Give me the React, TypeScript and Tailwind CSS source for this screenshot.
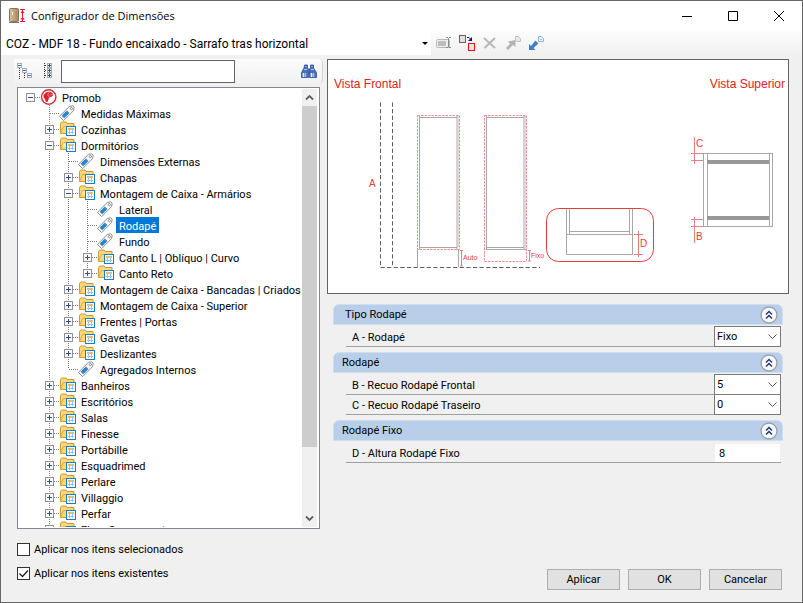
import { useState } from "react";
import type { ReactNode } from "react";

type Kind = "root" | "tag" | "folder";
type Mark = "plus" | "minus" | "none";
type Node = { label: string; level: number; kind: Kind; mark: Mark };

const nodes: Node[] = [
  { label: "Promob", level: 0, kind: "root", mark: "minus" },
  { label: "Medidas Máximas", level: 1, kind: "tag", mark: "none" },
  { label: "Cozinhas", level: 1, kind: "folder", mark: "plus" },
  { label: "Dormitórios", level: 1, kind: "folder", mark: "minus" },
  { label: "Dimensões Externas", level: 2, kind: "tag", mark: "none" },
  { label: "Chapas", level: 2, kind: "folder", mark: "plus" },
  { label: "Montagem de Caixa - Armários", level: 2, kind: "folder", mark: "minus" },
  { label: "Lateral", level: 3, kind: "tag", mark: "none" },
  { label: "Rodapé", level: 3, kind: "tag", mark: "none" },
  { label: "Fundo", level: 3, kind: "tag", mark: "none" },
  { label: "Canto L | Oblíquo | Curvo", level: 3, kind: "folder", mark: "plus" },
  { label: "Canto Reto", level: 3, kind: "folder", mark: "plus" },
  { label: "Montagem de Caixa - Bancadas | Criados", level: 2, kind: "folder", mark: "plus" },
  { label: "Montagem de Caixa - Superior", level: 2, kind: "folder", mark: "plus" },
  { label: "Frentes | Portas", level: 2, kind: "folder", mark: "plus" },
  { label: "Gavetas", level: 2, kind: "folder", mark: "plus" },
  { label: "Deslizantes", level: 2, kind: "folder", mark: "plus" },
  { label: "Agregados Internos", level: 2, kind: "tag", mark: "none" },
  { label: "Banheiros", level: 1, kind: "folder", mark: "plus" },
  { label: "Escritórios", level: 1, kind: "folder", mark: "plus" },
  { label: "Salas", level: 1, kind: "folder", mark: "plus" },
  { label: "Finesse", level: 1, kind: "folder", mark: "plus" },
  { label: "Portábille", level: 1, kind: "folder", mark: "plus" },
  { label: "Esquadrimed", level: 1, kind: "folder", mark: "plus" },
  { label: "Perlare", level: 1, kind: "folder", mark: "plus" },
  { label: "Villaggio", level: 1, kind: "folder", mark: "plus" },
  { label: "Perfar", level: 1, kind: "folder", mark: "plus" },
  { label: "Flora Component", level: 1, kind: "folder", mark: "plus" },
];

// True when a later sibling at `level` follows row `index` before its parent closes.
function continues(index: number, level: number) {
  for (let i = index + 1; i < nodes.length; i++) {
    if (nodes[i].level < level) return false;
    if (nodes[i].level === level) return true;
  }
  return false;
}

const dots = { stroke: "#808080", strokeDasharray: "1 1", shapeRendering: "crispEdges" as const };

function Guide({ index, level }: { index: number; level: number }) {
  const node = nodes[index];
  const own = node.level === level;
  const below = level > 0 && continues(index, level);
  return (
    <svg width="19" height="16" className="shrink-0" aria-hidden="true">
      {own && level > 0 && <path d="M9.500 0V8" {...dots} />}
      {below && <path d="M9.500 0V16" {...dots} />}
      {own && <path d="M10 8.500H20" {...dots} />}
      {own && node.mark !== "none" && (
        <g shapeRendering="crispEdges">
          <rect x="5.500" y="4.500" width="8" height="8" fill="#fafafa" stroke="#919191" />
          <path d={node.mark === "plus" ? "M7 8.500h5M9.500 6v5" : "M7 8.500h5"} stroke="#33508f" />
        </g>
      )}
    </svg>
  );
}

function NodeIcon({ kind, open }: { kind: Kind; open: boolean }) {
  return (
    <svg width="17" height="16" viewBox="0 0 17 16" className="shrink-0" aria-hidden="true">
      {kind === "root" && (
        <>
          <circle cx="8.700" cy="8" r="7.200" fill="#fff" stroke="#dc2a35" strokeWidth="1.400" />
          <path d="M3.500 6l2.500-2.500 3.500-1 3 1.500.5 2.500-2 1.500-2 .5-.5 2-1 2.500-2-.5-.5-2.500-1.500-1.500z" fill="#d8232f" />
          <path d="M9.500 3l-2 3 2 2M12.500 5.500l-3 .5" stroke="#f5a0a0" strokeWidth=".8" fill="none" />
        </>
      )}
      {kind === "tag" && (
        <g transform="rotate(-45 8.500 7.500)">
          <path d="M0 4.500h14l3 2v2l-3 2H0z" fill="#f6f6f6" stroke="#8a8a8a" strokeWidth=".9" />
          <rect x="2" y="5.700" width="7.500" height="3.600" fill="#2b8bd2" />
          <path d="M4.500 5.700v3.600M7 5.700v3.600" stroke="#1c68a8" strokeWidth=".6" />
          <circle cx="14" cy="7.500" r="1.100" fill="#fff" stroke="#777" strokeWidth=".8" />
        </g>
      )}
      {kind === "folder" && (
        <>
          <path d="M1.500 12.500V2.500l1-1.500h4.500l1 1.500h7v10z" fill="#fcd878" stroke="#d0963a" />
          <path d="M1.500 12.500l3-7h11" fill="none" stroke="#e0ac4c" />
          {open && <path d="M4.500 6.500h9v3h-10z" fill="#fff0b8" />}
          <g shapeRendering="crispEdges">
            <rect x="7.500" y="5.500" width="9" height="9" fill="#fff" stroke="#1580c4" />
            <path d="M9 8h6" stroke="#f2c260" strokeWidth="2" />
            <path d="M9 11.500h6M10.500 7v6M13.500 7v6" stroke="#9cc2e8" />
          </g>
        </>
      )}
    </svg>
  );
}

function Tree() {
  const [selected, setSelected] = useState("Rodapé");
  return (
    <div className="mx-[3px] mt-1 flex min-h-0 flex-1 border border-[#828790] bg-white py-px pr-[2px] pl-px">
      <ul className="min-w-0 flex-1 overflow-hidden pl-[2px]">
        {nodes.map((node, index) => (
          <li key={node.label} className="flex h-4 items-center">
            {Array.from({ length: node.level + 1 }, (_, level) => (
              <Guide key={level} index={index} level={level} />
            ))}
            <NodeIcon kind={node.kind} open={node.mark === "minus"} />
            <button
              type="button"
              onClick={() => setSelected(node.label)}
              className={
                selected === node.label
                  ? "ml-[2px] h-4 bg-[#0078d7] px-[3px] pt-[2px] whitespace-nowrap text-white"
                  : "ml-[2px] h-4 px-[3px] pt-[2px] whitespace-nowrap"
              }
            >
              {node.label}
            </button>
          </li>
        ))}
      </ul>
      <div className="flex w-[15px] flex-col bg-[#f0f0f0]">
        <button type="button" aria-label="Rolar para cima" className="flex h-[17px] items-center justify-center">
          <svg width="9" height="7" viewBox="0 0 9 7"><path d="M1 5.500l3.500-3.500L8 5.500" fill="none" stroke="#606060" strokeWidth="1.800" /></svg>
        </button>
        <div className="h-[341px] bg-[#cdcdcd]" />
        <button type="button" aria-label="Rolar para baixo" className="mt-auto flex h-[17px] items-center justify-center">
          <svg width="9" height="7" viewBox="0 0 9 7"><path d="M1 1.500L4.500 5 8 1.500" fill="none" stroke="#606060" strokeWidth="1.800" /></svg>
        </button>
      </div>
    </div>
  );
}

function TitleBar() {
  return (
    <header className="flex h-[30px] shrink-0 items-center bg-white pl-2">
      <svg width="17" height="16" viewBox="0 0 17 16" aria-hidden="true">
        <defs>
          <linearGradient id="door" x1="0" x2="1">
            <stop offset="0" stopColor="#d9c3a3" />
            <stop offset="1" stopColor="#a8845c" />
          </linearGradient>
        </defs>
        <rect x=".5" y=".5" width="9" height="13" rx="1" fill="url(#door)" stroke="#8d7252" />
        <path d="M0 14.500h10" stroke="#777" />
        <path d="M3.500 4v3" stroke="#fff" />
        <path d="M11 1.500h5M11 13.500h5M13.500 2v11" stroke="#e0202c" />
        <path d="M11.500 5l2-3 2 3zM11.500 10l2 3 2-3z" fill="#e0202c" />
      </svg>
      <h1 className="ml-[5px] flex-1 font-['Open_Sans',sans-serif] text-[11px]">Configurador de Dimensões</h1>
      <div className="flex h-full">
        <button type="button" aria-label="Minimizar" className="flex w-[46px] items-center justify-center">
          <svg width="10" height="10"><path d="M0 5.500h10" stroke="#000" /></svg>
        </button>
        <button type="button" aria-label="Maximizar" className="flex w-[46px] items-center justify-center">
          <svg width="10" height="10"><path d="M.5.5h9v9h-9z" fill="none" stroke="#000" /></svg>
        </button>
        <button type="button" aria-label="Fechar" className="flex w-[46px] items-center justify-center">
          <svg width="10" height="10"><path d="M0 0l10 10M10 0L0 10" stroke="#000" /></svg>
        </button>
      </div>
    </header>
  );
}

function ToolButton({ label, children }: { label: string; children: ReactNode }) {
  return (
    <button type="button" aria-label={label} className="flex w-[23px] items-center justify-center">
      <svg width="17" height="16" viewBox="0 0 17 16">{children}</svg>
    </button>
  );
}

function ModelBar() {
  return (
    <div className="flex h-6 shrink-0 bg-linear-to-b from-[#fcfcfc] to-[#f0f0f0]">
      <div className="grid w-[430px] items-center">
        <select
          aria-label="Modelo"
          className="col-start-1 row-start-1 h-6 w-full appearance-none bg-white pt-px pl-[5px] font-['Roboto',sans-serif] text-[12px]"
        >
          <option>COZ - MDF 18 - Fundo encaixado - Sarrafo tras horizontal</option>
        </select>
        <svg width="6" height="3" className="pointer-events-none col-start-1 row-start-1 mr-[3px] justify-self-end">
          <path d="M0 0h6L3 3z" />
        </svg>
      </div>
      <div className="flex pl-[2px]">
        <ToolButton label="Renomear">
          <rect x=".5" y="4.500" width="13" height="8" rx="1" fill="#eee" stroke="#b8b8b8" />
          <rect x="2" y="6" width="8" height="5" fill="#bcbcbc" />
          <path d="M10 2.500h2M13 2.500h2M12.500 3v9M10 12.500h2M13 12.500h2" stroke="#8a8a8a" />
        </ToolButton>
        <ToolButton label="Duplicar">
          <rect x=".5" y=".5" width="6" height="7" fill="#e2e0e4" stroke="#6d5f63" />
          <path d="M8 2.500h2l2 2" fill="none" stroke="#10107c" />
          <path d="M13 2v4H9z" fill="#10107c" />
          <rect x="9.500" y="8.500" width="6" height="7" fill="#dfe6ea" stroke="#f00c0c" />
        </ToolButton>
        <ToolButton label="Excluir">
          <path d="M2 3l11 10M13 3L2.500 13" stroke="#b8b8b8" strokeWidth="2" />
        </ToolButton>
        <ToolButton label="Exportar">
          <path d="M1 13l4-4-2-2.500L10.500 5v7L8 10l-5 5z" fill="#b4b4b4" />
          <path d="M10.500 1.500h3l2 2v3h-5z" fill="#e8e8e8" stroke="#c2c2c2" />
        </ToolButton>
        <ToolButton label="Importar">
          <path d="M1 9v6h6.500l-2-2 5-4.500-3-3-4.500 5.500z" fill="#3d7dc9" />
          <path d="M10.500 1.500h3l2 2v3h-5z" fill="#edf6ff" stroke="#86b6e8" />
          <path d="M12 4.500h2" stroke="#9cc3ec" />
        </ToolButton>
      </div>
    </div>
  );
}

function SearchBar() {
  return (
    <div className="flex h-6 shrink-0 items-center rounded-r-sm border-r border-[#d4d4d4] bg-linear-to-b from-[#fbfbfb] to-[#f2f2f2]">
      <button type="button" aria-label="Recolher tudo" className="ml-[2px]">
        <svg width="17" height="16" viewBox="0 0 17 16" shapeRendering="crispEdges">
          <path d="M3.500 5v11M6 8.500h2M8.500 10v6" stroke="#333" strokeDasharray="1 1" />
          <g fill="#fff" stroke="#a3abb8">
            <rect x="1.500" y=".5" width="4" height="4" />
            <rect x="6.500" y="5.500" width="4" height="4" />
            <rect x="11.500" y="10.500" width="4" height="4" />
          </g>
          <path d="M2 2.500h3M7 7.500h3M12 12.500h3" stroke="#3a69b8" />
        </svg>
      </button>
      <button type="button" aria-label="Expandir tudo" className="ml-[10px]">
        <svg width="10" height="16" viewBox="0 0 10 16" shapeRendering="crispEdges">
          <path d="M1.500 0v16M2 2.500h2M2 7.500h2M2 12.500h2" stroke="#333" strokeDasharray="1 1" />
          <g fill="#fff" stroke="#a3abb8">
            <rect x="4.500" y=".5" width="4" height="4" />
            <rect x="4.500" y="5.500" width="4" height="4" />
            <rect x="4.500" y="10.500" width="4" height="4" />
          </g>
          <path d="M5 2.500h3M6.500 1v3M5 7.500h3M6.500 6v3M5 12.500h3M6.500 11v3" stroke="#334f77" />
        </svg>
      </button>
      <input
        type="text"
        aria-label="Pesquisar"
        className="ml-2 h-[23px] w-[174px] border border-[#646464] bg-white px-1 outline-none"
      />
      <button type="button" aria-label="Localizar" className="mr-[5px] ml-auto">
        <svg width="16" height="15" viewBox="0 0 16 15">
          <path d="M3.500 1h3v3l1 1v8.500h-7V8.500L3 4zM9.500 1h3v3L15.500 8.500v5h-7V5l1-1z" fill="#4a70b5" stroke="#2c4f96" strokeWidth=".8" />
          <path d="M3 5.500h3M10 5.500h3M4.500 2.500h1M10.500 2.500h1" stroke="#a9c8f2" />
          <path d="M2.500 9v4M10.500 9v4" stroke="#e4f0ff" strokeWidth="1.600" />
          <path d="M4.500 9v4M12.500 9v4" stroke="#a4c2ee" strokeWidth="1.400" />
        </svg>
      </button>
    </div>
  );
}

function Diagram() {
  const gray = "#a8a8a8";
  const red = "#e44040";
  const soft = { stroke: "#ee9090", strokeDasharray: "2.500 1" };
  return (
    <figure className="border border-[#646464] bg-white">
      <svg viewBox="0 0 460 233" className="block w-full" fill="none" role="img" aria-label="Vista frontal e vista superior do rodapé">
        <g stroke="#5c5c5c" strokeDasharray="4.200 2.400">
          <path d="M52.500 42.500V207M64.500 42.500V207M52.500 207.500H212" />
        </g>
        <g stroke={gray}>
          <path d="M89.500 189.500V207M130.500 189.500V207" />
          <path d="M91.500 55.500V189.500M129 55.500V189.500M91.500 57.500H129M91.500 187.500H129" />
          <path d="M158.500 55.500V189.500M196 55.500V189.500M158.500 57.500H196M158.500 187.500H196M158 189.500H198" />
          <path d="M197.500 56V189M130.500 56V187" stroke="#dcdcdc" />
        </g>
        <rect x="89.500" y="55.500" width="42" height="134" {...soft} />
        <rect x="156.500" y="55.500" width="42" height="146" {...soft} />
        <path d="M133.500 190V206M132 190.500h3M132 206h3M201.500 190V201M200 190.500h3M200 201h3" stroke="#e88080" />
        <g stroke={gray}>
          <path d="M238.500 149V194.500H304.500V149M241.500 149V174M301.500 149V174M241 171.500H302M238.500 174.500H305" />
          <rect x="375.500" y="93.500" width="69" height="73" />
          <path d="M379.500 93.500V166.500M441.500 93.500V166.500" />
        </g>
        <rect x="218.500" y="148.500" width="107" height="53" rx="12" stroke="#e63c3c" />
        <path d="M379 100h62v4h-62zM379 156h62v4h-62z" fill="#989898" />
        <path d="M310.500 171V197M306 174.500h9M306 194.500h9" stroke="#e88080" />
        <path d="M366.500 77V104M363 93.500h12M363 100.500h12M366.500 157V183M363 159.500h12M363 166.500h12" stroke="#e88080" />
        <g fill={red} className="font-['Liberation_Sans',Arial,sans-serif] text-[10px]">
          <text x="6" y="28" fill="#e02020" className="text-[12px]">Vista Frontal</text>
          <text x="457" y="28" textAnchor="end" fill="#e02020" className="text-[12px]">Vista Superior</text>
          <text x="41" y="127">A</text>
          <text x="135" y="200" className="text-[7px]">Auto</text>
          <text x="203" y="198" className="text-[7px]">Fixo</text>
          <text x="312" y="187">D</text>
          <text x="368" y="87">C</text>
          <text x="368" y="180">B</text>
        </g>
      </svg>
    </figure>
  );
}

function Section({ title, inset, children }: { title: string; inset?: boolean; children: ReactNode }) {
  return (
    <section className="mb-[5px]">
      <div
        className={
          inset
            ? "flex h-[21px] items-center rounded-t-md border border-[#cfdff1] bg-[#b9cfe9] pr-1 pl-[11px]"
            : "flex h-[21px] items-center rounded-t-md border border-[#cfdff1] bg-[#b9cfe9] pr-1 pl-2"
        }
      >
        <h2 className="flex-1">{title}</h2>
        <button type="button" aria-label={`Recolher ${title}`}>
          <svg width="18" height="18" viewBox="0 0 18 18" className="block">
            <circle cx="9" cy="9" r="8" fill="#f7f8fa" stroke="#9a9fa8" strokeWidth="1.300" />
            <path d="M6 8.500l3-3 3 3M6 12.500l3-3 3 3" fill="none" stroke="#223a78" strokeWidth="1.500" />
          </svg>
        </button>
      </div>
      <div className="mr-[2px] ml-[13px] pt-[2px]">{children}</div>
    </section>
  );
}

const row = "flex h-5 items-center border-b border-[#a0a0a0] pl-[6px]";

function SelectRow({ id, label, options }: { id: string; label: string; options: string[] }) {
  return (
    <div className={row}>
      <label htmlFor={id} className="flex-1 pt-[2px]">{label}</label>
      <div className="-my-px grid w-[67px] items-center">
        <select
          id={id}
          className="col-start-1 row-start-1 h-[21px] w-full appearance-none border border-[#7a7a7a] bg-white pl-[2px]"
        >
          {options.map((option) => (
            <option key={option}>{option}</option>
          ))}
        </select>
        <svg width="9" height="6" className="pointer-events-none col-start-1 row-start-1 mr-1 justify-self-end">
          <path d="M.5.5l4 4 4-4" fill="none" stroke="#555" />
        </svg>
      </div>
    </div>
  );
}

function CheckOption({ label, initial }: { label: string; initial: boolean }) {
  const [checked, setChecked] = useState(initial);
  return (
    <label className="flex h-[17px] items-center gap-1">
      <span className="grid">
        <input
          type="checkbox"
          checked={checked}
          onChange={() => setChecked(!checked)}
          className="col-start-1 row-start-1 size-[13px] appearance-none border border-[#333] bg-white"
        />
        {checked && (
          <svg width="13" height="13" className="pointer-events-none col-start-1 row-start-1">
            <path d="M2.500 6.500l3 3 5.500-6" fill="none" stroke="#222" strokeWidth="1.300" />
          </svg>
        )}
      </span>
      {label}
    </label>
  );
}

function ActionButton({ children }: { children: ReactNode }) {
  return (
    <button type="button" className="h-[21px] w-[73px] border border-[#adadad] bg-[#e1e1e1]">
      {children}
    </button>
  );
}

export default function App() {
  return (
    <div className="flex h-screen min-h-[560px] flex-col border border-[#666] bg-[#f0f0f0] font-['Roboto',Arial,sans-serif] text-[11px] leading-4 text-black">
      <TitleBar />
      <ModelBar />
      <main className="flex min-h-0 flex-1 gap-1 pt-1 pr-[13px] pl-[13px]">
        <div className="flex w-[309px] shrink-0 flex-col">
          <SearchBar />
          <Tree />
          <div className="flex flex-col gap-[7px] pt-3 pb-5 pl-[3px]">
            <CheckOption label="Aplicar nos itens selecionados" initial={false} />
            <CheckOption label="Aplicar nos itens existentes" initial={true} />
          </div>
        </div>
        <div className="flex min-w-0 flex-1 flex-col">
          <Diagram />
          <form className="mx-[6px] mt-[10px]">
            <Section title="Tipo Rodapé" inset>
              <SelectRow id="tipo" label="A - Rodapé" options={["Fixo", "Auto"]} />
            </Section>
            <Section title="Rodapé">
              <SelectRow id="frontal" label="B - Recuo Rodapé Frontal" options={["5", "0"]} />
              <SelectRow id="traseiro" label="C - Recuo Rodapé Traseiro" options={["0", "5"]} />
            </Section>
            <Section title="Rodapé Fixo">
              <div className={row}>
                <label htmlFor="altura" className="flex-1 pt-[2px]">D - Altura Rodapé Fixo</label>
                <input id="altura" type="text" defaultValue="8" className="mr-px h-[18px] w-[65px] bg-white pt-px pl-1 outline-none" />
              </div>
            </Section>
          </form>
          <div className="mt-auto mr-[7px] mb-3 flex justify-end gap-2">
            <ActionButton>Aplicar</ActionButton>
            <ActionButton>OK</ActionButton>
            <ActionButton>Cancelar</ActionButton>
          </div>
        </div>
      </main>
    </div>
  );
}
